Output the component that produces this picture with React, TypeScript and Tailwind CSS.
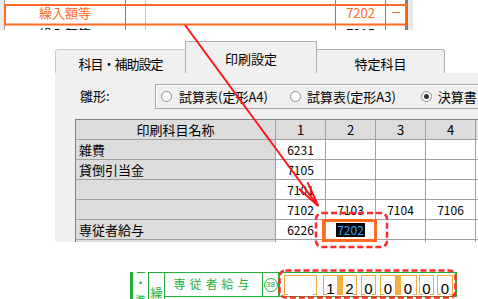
const ORANGE = '#ff6a22';

const TABLE_ROWS = [
  { name: '雑費', nums: ['6231', '', '', ''] },
  { name: '貸倒引当金', nums: ['7105', '', '', ''] },
  { name: '', nums: ['7101', '', '', ''] },
  { name: '', nums: ['7102', '7103', '7104', '7106'] },
  { name: '専従者給与', nums: ['6226', '7202', '', ''], selected: 1 },
  { name: '', nums: ['', '', '', ''] },
];

function StripRow({ h, name, num, orange, dash }: { h: string; name?: string; num?: string; orange?: boolean; dash?: boolean }) {
  const color = orange ? 'text-[#ff6a22]' : 'text-black';
  return (
    <div className={`flex ${h}`}>
      <div className="w-[5px] border-r border-[#a0a0a0] bg-[#ececec]" />
      <div className={`flex w-[121px] items-center justify-center border-r border-[#808080] pb-[4px] text-[13px] ${color}`}>{name}</div>
      <div className="w-[20px] border-r border-[#c8c8c8]" />
      <div className="w-[190px] border-r border-[#808080]" />
      <div className={`flex w-[50px] items-center justify-end border-r border-[#808080] pb-[4px] pr-[10px] text-[13px] ${color}`}>{num}</div>
      <div className="flex w-[19px] items-center justify-center pb-[4px]">
        {dash && <span className="h-[1px] w-[8px] bg-[#ff6a22]" />}
      </div>
      <div className="w-[3px] bg-[#808080]" />
      <div className="w-[5px] bg-[#e8e8e8]" />
    </div>
  );
}

function Radio({ checked }: { checked?: boolean }) {
  return (
    <span className="flex h-[11px] w-[11px] shrink-0 items-center justify-center rounded-full border border-[#8a8a8a] bg-white">
      {checked && <span className="h-[5px] w-[5px] rounded-full bg-[#333]" />}
    </span>
  );
}

function Slot({ d }: { d: string }) {
  return (
    <span className="flex w-[14px] items-end justify-center">
      <span className="translate-y-[1px] font-['Liberation_Sans',sans-serif] text-[15px] leading-[15px] text-black">{d}</span>
    </span>
  );
}

function AmountBox({ w, children }: { w: string; children?: React.ReactNode }) {
  return (
    <div className={`relative flex h-[20px] shrink-0 border-x border-t border-[#f5a93c] ${w}`}>
      {children}
      <span className="absolute bottom-0 left-0 h-[1px] w-[3px] bg-[#f5a93c]" />
      <span className="absolute bottom-0 right-0 h-[1px] w-[3px] bg-[#f5a93c]" />
    </div>
  );
}

const Bar = () => <span className="w-[6px] shrink-0 bg-[#f7b040]" />;

export default function App() {
  return (
    <div className="relative h-[299px] w-[478px] overflow-hidden bg-white font-['Noto_Sans_CJK_JP',sans-serif] text-black">
      {/* ledger strip at top */}
      <div className="h-[30px] overflow-hidden">
        <StripRow h="h-[4px]" />
        <StripRow h="h-[21px]" name="繰入額等" num="7202" orange dash />
        <StripRow h="h-[21px]" name="繰入額等" num="7215" />
      </div>

      {/* dialog */}
      <div className="ml-[55px] mt-[11px]">
        <div className="flex h-[32px] items-end text-[13px]">
          <div className="flex h-[24px] w-[130px] items-center justify-center rounded-tl-[3px] border-l border-t border-[#c8c8c8] bg-[#f0f0f0] pt-[4px] tracking-[-1px]">
            科目・補助設定
          </div>
          <div className="flex h-[32px] w-[132px] items-center justify-center border-x border-t border-[#adadad] bg-[#f0f0f0] pt-[2px]">
            印刷設定
          </div>
          <div className="flex h-[24px] w-[128px] items-center justify-center rounded-tr-[3px] border-r border-t border-[#adadad] bg-[#f0f0f0] pt-[4px]">
            特定科目
          </div>
        </div>

        <div className="h-[169px] w-[423px] overflow-hidden bg-[#f0f0f0]">
          <div className="mt-[11px] flex h-[25px] items-center">
            <span className="w-[100px] shrink-0 pb-[2px] pl-[25px] text-[13px]">雛形:</span>
            <div className="flex h-[25px] w-[340px] shrink-0 items-center border border-[#a8a8a8] pl-[5px] text-[13px] shadow-[inset_1px_1px_0_#ffffff]">
              <Radio />
              <span className="ml-[7px]">試算表(定形A4)</span>
              <span className="ml-[22px]"><Radio /></span>
              <span className="ml-[6px]">試算表(定形A3)</span>
              <span className="ml-[25px]"><Radio checked /></span>
              <span className="ml-[6px]">決算書</span>
            </div>
          </div>

          <div className="ml-[20px] mt-[10px] w-[460px] border-l border-t border-[#808080]">
            <div className="flex h-[20px] border-b border-[#a0a0a0] bg-[#dcdcdc] text-[13px]">
              <div className="flex w-[200px] shrink-0 items-center justify-center border-r border-[#a0a0a0]">印刷科目名称</div>
              {['1', '2', '3', '4', ''].map((n, i) => (
                <div key={i} className="flex w-[50px] shrink-0 items-center justify-center border-r border-[#a0a0a0]">{n}</div>
              ))}
            </div>
            {TABLE_ROWS.map((row, r) => (
              <div key={r} className="flex h-[20px] border-b border-[#a0a0a0]">
                <div className="flex w-[200px] shrink-0 items-center border-r border-[#a0a0a0] bg-[#dcdcdc] pl-[3px] text-[13px]">{row.name}</div>
                {[...row.nums, ''].map((n, i) => (
                  <div key={i} className="flex w-[50px] shrink-0 items-center justify-center border-r border-[#a0a0a0] bg-white text-[12px]">
                    {row.selected === i ? (
                      <span className="bg-black px-[1px] leading-[14px] text-[#3ea6ff]">{n}</span>
                    ) : (
                      n
                    )}
                  </div>
                ))}
              </div>
            ))}
          </div>
        </div>
      </div>

      {/* paper form */}
      <div className="ml-[130px] mt-[30px] flex h-[27px] text-[#22b03a]">
        <div className="w-[3px] shrink-0 bg-[#22b03a]" />
        <div className="flex w-[15px] shrink-0 flex-col items-center overflow-hidden">
          <span className="h-[1px] w-[8px] shrink-0 bg-[#22b03a]" />
          <span className="mt-[4px] shrink-0 text-[12px] leading-[12px]">・</span>
          <span className="mt-[6px] shrink-0 text-[11px] leading-[11px]">準</span>
        </div>
        <div className="flex border-t border-[#22b03a]">
          <div className="w-[17px] shrink-0 overflow-hidden border-x border-[#22b03a] pt-[14px] text-center text-[12px] leading-[12px]">繰</div>
          <div className="flex h-[24px] border-b border-[#22b03a]">
            <div className="flex w-[98px] shrink-0 items-center justify-center border-r border-[#22b03a] pb-[2px] text-[12px] tracking-[4px]">
              専従者給与
            </div>
            <div className="flex w-[15px] shrink-0 items-center justify-center">
              <span className="flex h-[14px] w-[14px] items-center justify-center rounded-full border border-[#22b03a] font-['Liberation_Sans',sans-serif] text-[8px] leading-none">
                38
              </span>
            </div>
            <div className="flex w-[179px] shrink-0 items-start gap-[4px] border-x-2 border-[#22b03a] pl-[4px] pt-[2px]">
              <AmountBox w="w-[33px]" />
              <div className="ml-[2px]">
                <AmountBox w="w-[34px]">
                  <Slot d="1" />
                  <Bar />
                  <Slot d="2" />
                </AmountBox>
              </div>
              <AmountBox w="w-[15px]"><Slot d="0" /></AmountBox>
              <AmountBox w="w-[37px]">
                <Slot d="0" />
                <Bar />
                <Slot d="0" />
              </AmountBox>
              <div className="-ml-[2px]">
                <AmountBox w="w-[15px]"><Slot d="0" /></AmountBox>
              </div>
              <div className="-ml-[1px]">
                <AmountBox w="w-[16px]"><Slot d="0" /></AmountBox>
              </div>
            </div>
          </div>
        </div>
      </div>

      {/* annotations */}
      <svg className="pointer-events-none absolute left-0 top-0" width={478} height={299}>
        <rect x={5} y={5} width={401} height={19.5} fill="none" stroke={ORANGE} strokeWidth={2} />
        <line x1={185} y1={25} x2={318} y2={206} stroke="#ff1414" strokeWidth={2} />
        <polyline points="307.6,182.3 318.3,206 298.9,188.7" fill="none" stroke="#ff1414" strokeWidth={2} />
        <rect x={316} y={213} width={71} height={34} rx={6} fill="none" stroke="#ff2a2a" strokeWidth={2.5} strokeDasharray="6 3" />
        <rect x={323.5} y={220.5} width={52} height={20} fill="none" stroke={ORANGE} strokeWidth={3} />
        <rect x={279.5} y={270.5} width={176} height={27} rx={6} fill="none" stroke="#ff2a2a" strokeWidth={2.5} strokeDasharray="6 3" />
      </svg>
    </div>
  );
}
